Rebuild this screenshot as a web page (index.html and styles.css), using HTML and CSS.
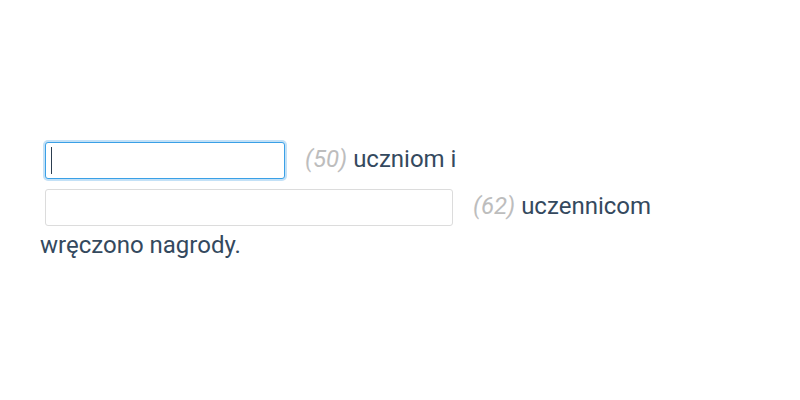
FILE: index.html
```html
<!DOCTYPE html>
<html lang="pl">
<head>
<meta charset="utf-8">
<link rel="stylesheet" href="styles.css">
</head>
<body>
<main class="page">
  <p class="sentence">
    <span class="field-wrap is-focused"><input class="field field-short" type="text" aria-label="uczniom"></span>
    <span class="count">(50)</span> uczniom i
    <span class="field-wrap"><input class="field field-long" type="text" aria-label="uczennicom"></span>
    <span class="count">(62)</span> uczennicom wręczono nagrody.
  </p>
</main>
</body>
</html>
```
FILE: styles.css
```css
html, body {
  margin: 0;
  padding: 0;
  background: #ffffff;
}
.page {
  padding: 137px 40px 0 40px;
  width: 640px;
}
.sentence {
  margin: 0;
  font-family: Roboto, "Liberation Sans", sans-serif;
  font-size: 24px;
  line-height: normal;
  color: #34495e;
}
.field-wrap {
  position: relative;
  display: inline-flex;
  vertical-align: middle;
  margin: 5px 14px 5px 5px;
}
.field {
  box-sizing: border-box;
  height: 37px;
  padding: 0 6px;
  border: 1px solid #dcdcdc;
  border-radius: 3px;
  background: #fff;
  font: inherit;
  font-size: 22px;
  color: #34495e;
  outline: none;
}
.field-short { width: 240px; }
.field-long { width: 408px; }
.is-focused .field {
  border-color: #3aa0e6;
  box-shadow: 0 0 0 2px #c3e1f7;
}
.is-focused::after {
  content: "";
  position: absolute;
  left: 6px;
  top: 5px;
  width: 1px;
  height: 27px;
  background: #2c3e50;
}
.count {
  color: #bdbdbd;
  font-style: italic;
}
```
